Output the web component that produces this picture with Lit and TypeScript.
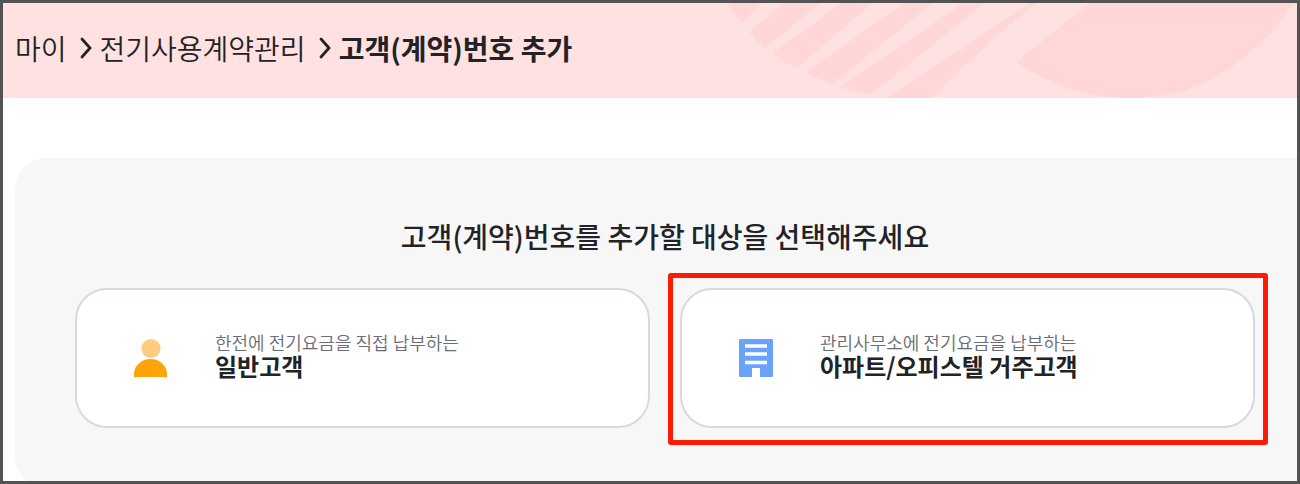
import { LitElement, html, css, svg } from "lit";
import { customElement } from "lit/decorators.js";

const chevron = html`<svg class="chevron" viewBox="0 0 12 22" aria-hidden="true">
  <path d="M2 2 L10 11 L2 20" fill="none" stroke="#222327" stroke-width="2.8" stroke-linecap="round" />
</svg>`;

const personIcon = svg`
  <circle cx="18" cy="10.5" r="9.6" fill="#ffcc80" />
  <path d="M1 39 V36 A16.5 15 0 0 1 34 36 V39 Z" fill="#ffa30a" />`;

const buildingIcon = svg`
  <path d="M2 1 H34 Q35 1 35 2 V38 Q35 39 34 39 H22 V30 H14 V39 H2 Q1 39 1 38 V2 Q1 1 2 1 Z" fill="#6ba3fb" />
  <path d="M7 8 H29 M7 16 H29 M7 24.5 H29" stroke="#fff" stroke-width="3.6" />`;

const choices = [
  { icon: personIcon, hint: "한전에 전기요금을 직접 납부하는", name: "일반고객", marked: false },
  { icon: buildingIcon, hint: "관리사무소에 전기요금을 납부하는", name: "아파트/오피스텔 거주고객", marked: true },
];

@customElement("app-root")
export class AppRoot extends LitElement {
  static styles = css`
    :host {
      display: block;
      box-sizing: border-box;
      height: 100vh;
      overflow: hidden;
      border: 3px solid #535353;
      background: #fff;
      color: #222327;
      font-family: "Noto Sans CJK KR", sans-serif;
    }
    .banner {
      position: relative;
      overflow: hidden;
      background: #ffe1e1;
      padding: 25px 12px 30px;
    }
    .art {
      position: absolute;
      top: 0;
      right: 0;
      width: 594px;
      height: 95px;
    }
    .trail {
      position: relative;
      display: flex;
      align-items: center;
      margin: 0;
      padding: 0;
      list-style: none;
      font-size: 28px;
      line-height: 40px;
      font-weight: 350;
    }
    .trail li {
      display: flex;
      align-items: center;
    }
    .trail a {
      color: inherit;
      text-decoration: none;
    }
    .current {
      font-weight: 700;
    }
    .chevron {
      width: 12px;
      height: 22px;
      margin: 0 8px 0 13px;
    }
    .panel {
      margin: 60px -18px 0 12px;
      padding: 58px 60px 60px;
      border-radius: 32px 0 0 32px;
      background: #f7f7f7;
    }
    .title {
      margin: 0 0 32px;
      text-align: center;
      font-size: 28px;
      line-height: 40px;
      font-weight: 500;
    }
    .choices {
      display: grid;
      grid-template-columns: 1fr 1fr;
      gap: 30px;
    }
    .choice {
      position: relative;
      display: flex;
    }
    .card {
      flex: 1;
      display: flex;
      align-items: center;
      gap: 46px;
      min-height: 140px;
      box-sizing: border-box;
      padding: 0 56px;
      border: 2px solid #d6d9df;
      border-radius: 32px;
      background: #fff;
      color: inherit;
      font: inherit;
      text-align: left;
      cursor: pointer;
    }
    .icon {
      flex: none;
      width: 36px;
      height: 40px;
    }
    .text {
      display: flex;
      flex-direction: column;
      padding-bottom: 6px;
    }
    .hint {
      font-size: 18px;
      line-height: 22px;
      font-weight: 350;
      color: #6b6d76;
    }
    .name {
      font-size: 24px;
      line-height: 26px;
      font-weight: 700;
    }
    .marker {
      position: absolute;
      inset: -15px -13px -17px -12px;
      border: 5px solid #fd1b05;
      border-radius: 3px;
      pointer-events: none;
    }
  `;

  render() {
    return html`
      <header class="banner">
        <svg class="art" viewBox="703 3 594 95" aria-hidden="true">
          <g fill="#ffd7d8">
            <path d="M727 3 H762 L742 23 Q733 13 727 3 Z" />
            <path d="M784 3 H820 L765 48 Q756 41 749 32 Z" />
            <path d="M842 3 H872 L797 68 Q784 62 773 53 Z" />
            <path d="M904 3 H932 L833 84 Q818 79 806 72 Z" />
            <path d="M963 3 H984 L872 94 Q855 93 840 87 Z" />
            <path d="M1031 3 H1036 Q985 44 932 98 H886 Z" />
            <path d="M1090 3 H1294 Q1228 98 1130 98 Q1070 98 1016 62 Z" />
          </g>
        </svg>
        <nav>
          <ol class="trail">
            <li><a href="#my">마이</a></li>
            <li>${chevron}<a href="#contract">전기사용계약관리</a></li>
            <li class="current" aria-current="page">${chevron}고객(계약)번호 추가</li>
          </ol>
        </nav>
      </header>
      <main class="panel">
        <h1 class="title">고객(계약)번호를 추가할 대상을 선택해주세요</h1>
        <div class="choices">
          ${choices.map(
            (c) => html`<div class="choice">
              <button class="card" type="button">
                <svg class="icon" viewBox="0 0 36 40" aria-hidden="true">${c.icon}</svg>
                <span class="text">
                  <span class="hint">${c.hint}</span>
                  <span class="name">${c.name}</span>
                </span>
              </button>
              ${c.marked ? html`<span class="marker"></span>` : null}
            </div>`
          )}
        </div>
      </main>
    `;
  }
}
